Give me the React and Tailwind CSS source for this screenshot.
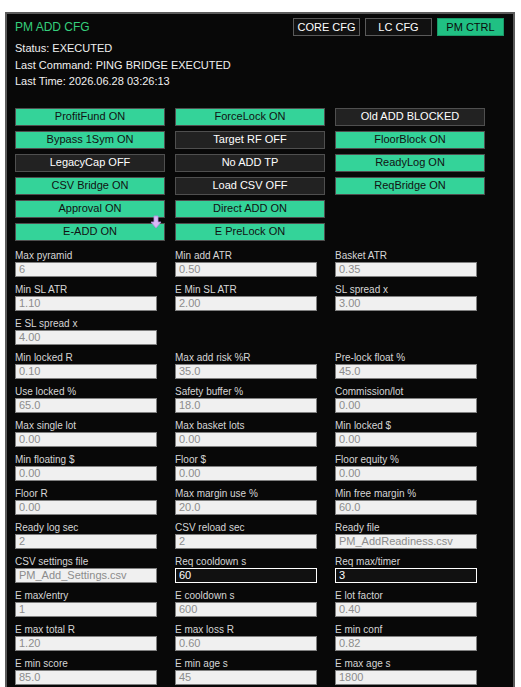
import React from "react"

const font = { fontFamily: '"Liberation Sans", Arial, sans-serif' }

const toggles = [
  ["ProfitFund ON", true],
  ["ForceLock ON", true],
  ["Old ADD BLOCKED", false],
  ["Bypass 1Sym ON", true],
  ["Target RF OFF", false],
  ["FloorBlock ON", true],
  ["LegacyCap OFF", false],
  ["No ADD TP", false],
  ["ReadyLog ON", true],
  ["CSV Bridge ON", true],
  ["Load CSV OFF", false],
  ["ReqBridge ON", true],
  ["Approval ON", true],
  ["Direct ADD ON", true],
  null,
  ["E-ADD ON", true],
  ["E PreLock ON", true],
  null,
]

const fields = [
  ["Max pyramid", "6"],
  ["Min add ATR", "0.50"],
  ["Basket ATR", "0.35"],
  ["Min SL ATR", "1.10"],
  ["E Min SL ATR", "2.00"],
  ["SL spread x", "3.00"],
  ["E SL spread x", "4.00"],
  null,
  null,
  ["Min locked R", "0.10"],
  ["Max add risk %R", "35.0"],
  ["Pre-lock float %", "45.0"],
  ["Use locked %", "65.0"],
  ["Safety buffer %", "18.0"],
  ["Commission/lot", "0.00"],
  ["Max single lot", "0.00"],
  ["Max basket lots", "0.00"],
  ["Min locked $", "0.00"],
  ["Min floating $", "0.00"],
  ["Floor $", "0.00"],
  ["Floor equity %", "0.00"],
  ["Floor R", "0.00"],
  ["Max margin use %", "20.0"],
  ["Min free margin %", "60.0"],
  ["Ready log sec", "2"],
  ["CSV reload sec", "2"],
  ["Ready file", "PM_AddReadiness.csv"],
  ["CSV settings file", "PM_Add_Settings.csv"],
  ["Req cooldown s", "60", true],
  ["Req max/timer", "3", true],
  ["E max/entry", "1"],
  ["E cooldown s", "600"],
  ["E lot factor", "0.40"],
  ["E max total R", "1.20"],
  ["E max loss R", "0.60"],
  ["E min conf", "0.82"],
  ["E min score", "85.0"],
  ["E min age s", "45"],
  ["E max age s", "1800"],
]

const Tab = ({ label, active }) => (
  <div
    className={`w-[67px] h-[18px] flex items-center justify-center text-[11px] border ${
      active ? "bg-[#20c083] border-[#1a9a68] text-[#0a0a0a]" : "bg-[#111111] border-[#5a5a5a] text-white"
    }`}
  >
    {label}
  </div>
)

const Field = ({ label, value, dark }) => (
  <div className="h-[34px]">
    <div className="h-[12px] text-[10px] leading-[12px] text-[#d6d6d6]">{label}</div>
    <div
      className={`w-[142px] h-[15px] border flex items-center pl-[3px] text-[11px] leading-none ${
        dark ? "bg-[#111111] border-white text-white" : "bg-[#f0f0f0] border-[#808080] text-[#8c8c8c]"
      }`}
    >
      {value}
    </div>
  </div>
)

export default function App() {
  return (
    <div className="min-h-[687px] bg-white pt-[12px] pl-[5px]" style={font}>
      <div className="w-[510px] bg-[#080808] border-2 border-[#5c5c5c] px-[8px] pt-[4px] pb-[20px]">
        {/* Header */}
        <div className="flex items-center justify-between h-[18px] pr-[1px]">
          <div className="text-[12px] text-[#35cf7c]">PM ADD CFG</div>
          <div className="flex gap-[5px]">
            <Tab label="CORE CFG" />
            <Tab label="LC CFG" />
            <Tab label="PM CTRL" active />
          </div>
        </div>

        <div className="mt-[4px] text-[11px] leading-[16.5px] text-[#f0f0f0]">
          <div>Status: EXECUTED</div>
          <div>Last Command: PING BRIDGE EXECUTED</div>
          <div>Last Time: 2026.06.28 03:26:13</div>
        </div>

        {/* Toggle buttons */}
        <div className="relative mt-[18px] grid grid-cols-[150px_150px_150px] gap-x-[10px] gap-y-[5px]">
          {toggles.map((t, i) =>
            t ? (
              <div
                key={i}
                className={`h-[18px] flex items-center justify-center text-[11px] border border-[#4f4f4f] ${
                  t[1] ? "bg-[#34d399] text-[#111111]" : "bg-[#222222] text-white"
                }`}
              >
                {t[0]}
              </div>
            ) : (
              <div key={i} />
            )
          )}
          <svg className="absolute left-[135px] top-[107px]" width="12" height="14" viewBox="0 0 12 14">
            <path d="M4 1h4v6h3l-5 6-5-6h3z" fill="#d9b8f5" stroke="#b58fe0" strokeWidth="0.8" />
          </svg>
        </div>

        {/* Fields */}
        <div className="mt-[9px] grid grid-cols-[160px_160px_160px]">
          {fields.map((f, i) => (f ? <Field key={i} label={f[0]} value={f[1]} dark={f[2]} /> : <div key={i} />))}
        </div>
      </div>
    </div>
  )
}
